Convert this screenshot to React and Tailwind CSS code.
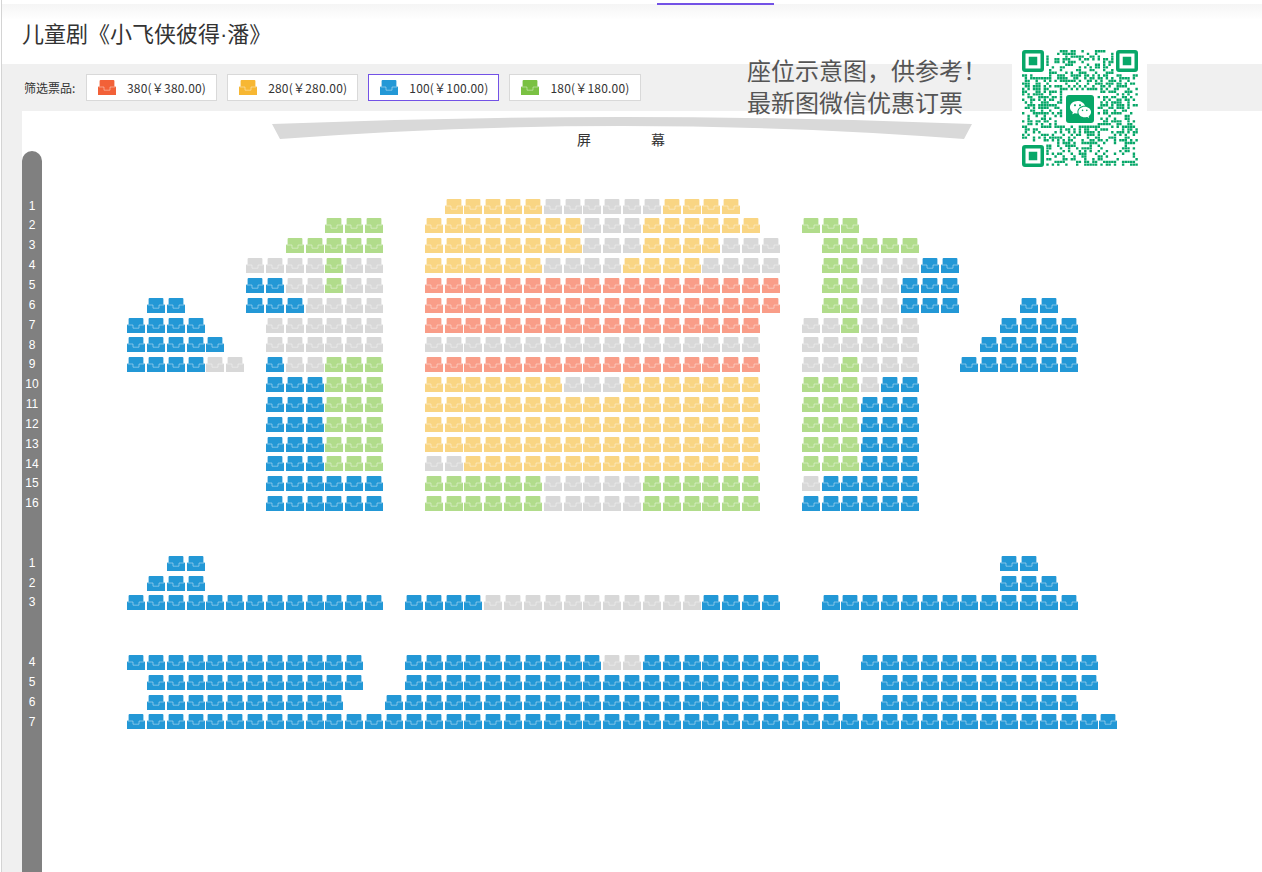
import React from "react";
import { RiWechatFill } from "react-icons/ri";

const seatColors = {
  R: "text-[#f99d88]",
  Y: "text-[#f9d583]",
  G: "text-[#b1dc8b]",
  B: "text-[#2398d6]",
  ".": "text-[#d8d8d8]",
};

const ticketTypes = [
  { label: "380(\uFFE5380.00)", color: "text-[#f26138]" },
  { label: "280(\uFFE5280.00)", color: "text-[#f7b733]" },
  { label: "100(\uFFE5100.00)", color: "text-[#2398d6]", active: true },
  { label: "180(\uFFE5180.00)", color: "text-[#7ac143]" },
];

// start column -> seats: R/Y/G/B price, "." sold
const seatRows = [
  { 16: "YYYYY......YYYY" },
  { 10: "GGG", 15: "YYYYYYYY...YYYYYY", 34: "GGG" },
  { 8: "GGGGG", 15: "YYYYYYYY...YYYY...", 35: "GGGGG" },
  { 6: "....G..", 15: "YYYYYY....YYYY....", 35: "GG...BB" },
  { 6: "BB..G..", 15: "RRRRRRRRRRRRRRRRRR", 35: "GG..BBB" },
  { 1: "BB", 6: "BBB....", 15: "RRRRRRRRRRRRRRRRRR", 35: "GG..BBB", 45: "BB" },
  { 0: "BBBB", 7: "......", 15: "RRRRRRRRRRRRRRRRR", 34: "..G...", 44: "BBBB" },
  { 0: "BBBBB", 7: "......", 15: ".................", 34: "......", 43: "BBBBB" },
  { 0: "BBBB..", 7: "B..GGG", 15: "RRRRRRRRRRRRRRRRR", 34: "..G...", 42: "BBBBBB" },
  { 7: "BBBGGG", 15: "YYYYYYY...YYYYYYY", 34: "GGG.BB" },
  { 7: "BBBGGG", 15: "YYYYYYYYYYYYYYYYY", 34: "GGGBBB" },
  { 7: "BBBGGG", 15: "YYYYYYYYYYYYYYYYY", 34: "GGGBBB" },
  { 7: "BBBGGG", 15: "YYYYYYYYYYYYYYYYY", 34: "GGGBBB" },
  { 7: "BBBGGG", 15: "..YYYYYYYYYYYYYYY", 34: "GGGBBB" },
  { 7: "BBBBBB", 15: "GGGGGG.....GGGGGG", 34: ".BBBBB" },
  { 7: "BBBBBB", 15: "GGGGGG.....GGGGGG", 34: "BBBBBB" },
  {},
  {},
  { 2: "BB", 44: "BB" },
  { 1: "BBB", 44: "BBB" },
  { 0: "BBBBBBBBBBBBB", 14: "BBBB...........BBBB", 35: "BBBBBBBBBBBBB" },
  {},
  {},
  { 0: "BBBBBBBBBBBB", 14: "BBBBBBBBBB..BBBBBBBBB", 37: "BBBBBBBBBBBB" },
  { 1: "BBBBBBBBBBB", 14: "BBBBBBBBBBBBBBBBBBBBBB", 38: "BBBBBBBBBBB" },
  { 1: "BBBBBBBBBB", 13: "BBBBBBBBBBBBBBBBBBBBBBB", 38: "BBBBBBBBBB" },
  { 0: "BBBBBBBBBBBBBBBBBBBBBBBBBBBBBBBBBBBBBBBBBBBBBBBBBB" },
];

const rowLabels = ["1", "2", "3", "4", "5", "6", "7", "8", "9", "10", "11", "12", "13", "14", "15", "16", "", "", "1", "2", "3", "", "", "4", "5", "6", "7"];

function expandRow(row) {
  const cells = Array(50).fill(null);
  Object.entries(row).forEach(([start, codes]) => {
    [...codes].forEach((code, i) => {
      cells[Number(start) + i] = code;
    });
  });
  return cells;
}

function SeatIcon({ className }) {
  return (
    <svg viewBox="0 0 18 15" className={`block w-[18px] h-[15px] ${className}`}>
      <path
        fill="currentColor"
        d="M2.6 0H15.4Q16.4 0 16.4 1V6.5H17.4Q18 6.5 18 7.2V15H0V7.2Q0 6.5 0.6 6.5H1.6V1Q1.6 0 2.6 0Z"
      />
      <path d="M0.8 7H6V10.2H12V7H17.2" fill="none" stroke="white" strokeOpacity="0.5" strokeWidth="0.8" />
    </svg>
  );
}

function QrCode() {
  const size = 43;
  const mod = 2.7;
  let seed = 20240611;
  const next = () => {
    seed = (seed * 1664525 + 1013904223) >>> 0;
    return (seed >>> 16) / 65536;
  };
  const inFinder = (x, y) => (x < 9 && y < 9) || (x >= size - 9 && y < 9) || (x < 9 && y >= size - 9);
  const inLogo = (x, y) => x >= 15 && x <= 27 && y >= 15 && y <= 27;
  let d = "";
  for (let y = 0; y < size; y++) {
    for (let x = 0; x < size; x++) {
      if (inFinder(x, y) || inLogo(x, y)) continue;
      if (next() < 0.46) d += `M${x * mod} ${y * mod}h2.4v2.4h-2.4z`;
    }
  }
  const finders = [
    [0, 0],
    [94, 0],
    [0, 95],
  ];
  return (
    <div className="relative w-[116px] h-[117px]">
      <svg viewBox="0 0 116 117" className="block w-[116px] h-[117px] text-[#07a768]">
        <path d={d} fill="currentColor" />
        {finders.map(([x, y]) => (
          <g key={`${x}-${y}`} fill="currentColor">
            <path
              fillRule="evenodd"
              d={`M${x + 3} ${y}h16q3 0 3 3v16q0 3 -3 3h-16q-3 0 -3 -3v-16q0 -3 3 -3zM${x + 3.5} ${y + 3.5}v15h15v-15z`}
            />
            <rect x={x + 6.75} y={y + 6.75} width="8.5" height="8.5" />
          </g>
        ))}
      </svg>
      <div className="absolute left-[44px] top-[45px] w-[28px] h-[28px] rounded-[3px] bg-[#07a768] flex items-center justify-center">
        <RiWechatFill className="w-[23px] h-[23px] text-white" />
      </div>
    </div>
  );
}

export default function App() {
  return (
    <div className="h-[872px] overflow-hidden bg-white pl-px font-['Noto_Sans_CJK_SC','Liberation_Sans',sans-serif] text-[#333]">
      <div className="relative h-full flex flex-col border-l border-[#d4d4d4]">
        <div className="absolute left-[655px] top-[3px] w-[117px] h-[2px] bg-[#7352e6]" />
        <div className="h-[4px] bg-white shrink-0" />
        <div className="h-[16px] bg-gradient-to-b from-[#f5f5f5] to-white shrink-0" />

        <div className="h-[44px] shrink-0 pl-[20px] -mt-[3px] mb-[3px]">
          <h1 className="text-[22px] leading-[30px] font-normal text-[#333]">
            儿童剧《小飞侠彼得<span className="font-['Liberation_Sans',sans-serif]">·</span>潘》
          </h1>
        </div>

        <div className="h-[47px] shrink-0 bg-[#f0f0f0] pl-[22px] flex items-center gap-[10px]">
          <span className="text-[12px] text-[#333] w-[52px] whitespace-nowrap">筛选票品:</span>
          {ticketTypes.map((t) => (
            <div
              key={t.label}
              className={`h-[27px] pl-[11px] pr-[10px] flex items-center gap-[11px] bg-white border ${t.active ? "border-[#7352e6]" : "border-[#d9d9d9]"}`}
            >
              <SeatIcon className={t.color} />
              <span className="text-[12px] tracking-[0.2px] text-[#333] whitespace-nowrap">{t.label}</span>
            </div>
          ))}
        </div>

        <div className="flex-1 bg-[#f0f0f0] pl-[20px] min-h-0">
          <div className="h-full bg-white flex flex-col">
            <div className="h-[40px] shrink-0 pl-[250px] pt-[6px] relative">
              <svg viewBox="272 117 700 23" className="block w-[700px] h-[23px] text-[#d9d9d9]">
                <path fill="currentColor" d="M272 124Q622 110 972 124L964 139Q622 113 280 139Z" />
              </svg>
              <div className="absolute left-[555px] top-[19px] flex gap-[60px] text-[14px] leading-[18px] text-[#333]">
                <span>屏</span>
                <span>幕</span>
              </div>
            </div>

            <div className="flex-1 min-h-0 flex items-stretch">
              <div className="w-[20px] shrink-0 bg-[#808080] rounded-t-[10px] pt-[45.6px]">
                {rowLabels.map((label, i) => (
                  <div key={i} className="h-[19.85px] leading-[19.85px] text-center text-[12px] text-white font-['Liberation_Sans',sans-serif]">
                    {label}
                  </div>
                ))}
              </div>

              <div className="ml-[85px] mt-[47.5px] grid grid-cols-[repeat(50,19.845px)] auto-rows-[19.85px] self-start">
                {seatRows.flatMap((row, r) =>
                  expandRow(row).map((code, c) => (
                    <div key={`${r}-${c}`}>{code && <SeatIcon className={seatColors[code]} />}</div>
                  ))
                )}
              </div>
            </div>
          </div>
        </div>

        <div className="absolute left-[745px] top-[54px] text-[24px] leading-[32px] text-[#555] whitespace-nowrap">
          <div>{"座位示意图\uFF0C供参考\uFF01"}</div>
          <div>最新图微信优惠订票</div>
        </div>

        <div className="absolute left-[1010px] top-[40px] w-[135px] h-[135px] bg-white p-[10px]">
          <QrCode />
        </div>
      </div>
    </div>
  );
}
